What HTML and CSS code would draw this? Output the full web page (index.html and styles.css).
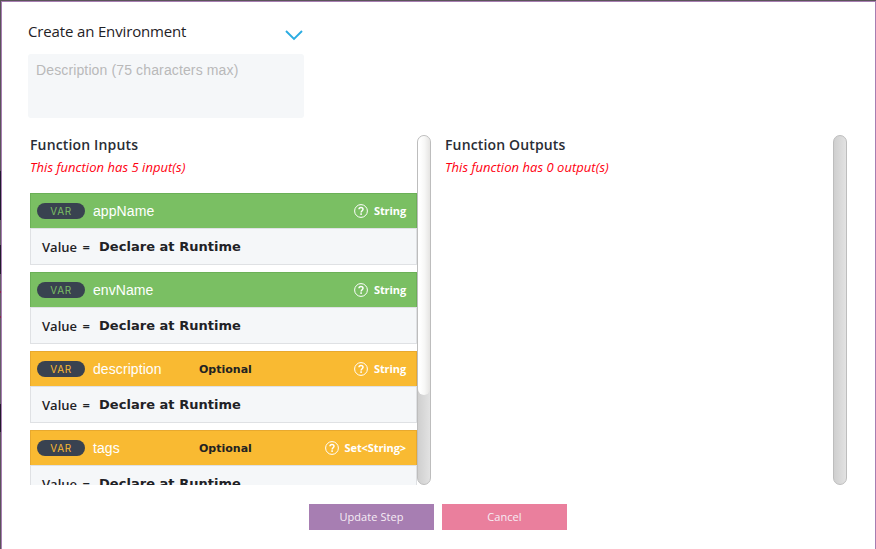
FILE: index.html
```html
<!DOCTYPE html>
<html lang="en">
<head>
<meta charset="utf-8">
<title>Create an Environment</title>
<link rel="stylesheet" href="styles.css">
</head>
<body>
<svg class="defs" width="0" height="0" aria-hidden="true">
  <symbol id="help" viewBox="0 0 14 14">
    <circle cx="7" cy="7" r="6.4" fill="none" stroke="currentColor" stroke-width="1"/>
    <path d="M5 5.3C5 3 9 3 9 5.2C9 6.7 7.1 6.8 7.1 8.5" fill="none" stroke="currentColor" stroke-width="1.5"/>
    <rect x="6.3" y="9.3" width="1.6" height="1.6" fill="currentColor"/>
  </symbol>
</svg>
<main class="dialog">
  <header class="title">
    <h1>Create an Environment</h1>
    <svg width="18" height="11" viewBox="0 0 18 11"><path d="M1 1L9 9L17 1" fill="none" stroke="#2bace2" stroke-width="1.9"/></svg>
  </header>
  <textarea class="desc" placeholder="Description (75 characters max)"></textarea>
  <div class="columns">
    <section class="col inputs">
      <div class="content">
        <h2>Function Inputs</h2>
        <p class="count">This function has 5 input(s)</p>
        <div class="list">
          <article class="card green">
            <div class="head"><span class="var">VAR</span><span class="name">appName</span><svg class="help"><use href="#help"/></svg><b class="type">String</b></div>
            <div class="body"><span class="label">Value =</span><b>Declare at Runtime</b></div>
          </article>
          <article class="card green">
            <div class="head"><span class="var">VAR</span><span class="name">envName</span><svg class="help"><use href="#help"/></svg><b class="type">String</b></div>
            <div class="body"><span class="label">Value =</span><b>Declare at Runtime</b></div>
          </article>
          <article class="card amber">
            <div class="head"><span class="var">VAR</span><span class="name">description</span><b class="optional">Optional</b><svg class="help"><use href="#help"/></svg><b class="type">String</b></div>
            <div class="body"><span class="label">Value =</span><b>Declare at Runtime</b></div>
          </article>
          <article class="card amber">
            <div class="head"><span class="var">VAR</span><span class="name">tags</span><b class="optional">Optional</b><svg class="help"><use href="#help"/></svg><b class="type">Set&lt;String&gt;</b></div>
            <div class="body"><span class="label">Value =</span><b>Declare at Runtime</b></div>
          </article>
        </div>
      </div>
      <div class="track"><div class="thumb"></div></div>
    </section>
    <section class="col outputs">
      <div class="content">
        <h2>Function Outputs</h2>
        <p class="count">This function has 0 output(s)</p>
      </div>
      <div class="track"></div>
    </section>
  </div>
  <footer class="actions">
    <button class="update">Update Step</button>
    <button class="cancel">Cancel</button>
  </footer>
</main>
</body>
</html>
```
FILE: styles.css
```css
* { box-sizing: border-box; }
body {
  margin: 0;
  height: 549px;
  overflow: hidden;
  padding: 1px 0 0 1px;
  font-family: "Open Sans", sans-serif;
  color: #1f2226;
  background: linear-gradient(#5a5559 0 171px, #1e1b2c 171px 220px, #5f5b60 220px 245px, #201d2a 245px 274px, #625d64 274px 291px, #8a2848 291px 293px, #625d64 293px 316px, #8a2848 316px 318px, #625d64 318px 404px, #211b2a 404px 432px, #5a5559 432px);
}
.defs { position: absolute; }
.dialog {
  height: 548px;
  border: 1px solid #a77eb2;
  border-bottom: 0;
  background: #fff;
  padding: 19px 28px 0 26px;
}
.title {
  display: flex;
  justify-content: space-between;
  width: 275px;
  height: 33px;
}
h1 { margin: -1px 0 0; font-size: 15px; font-weight: 400; line-height: 22px; letter-spacing: -.15px; }
.title svg { margin-top: 9px; }
.desc {
  display: block;
  width: 276px;
  height: 64px;
  border: 0;
  border-radius: 3px;
  padding: 8px;
  resize: none;
  background: #f5f7f9;
  font: 14px/17px "Liberation Sans", sans-serif;
  letter-spacing: .13px;
}
.desc::placeholder { color: #b9b9b9; }
.columns { display: flex; margin-top: 17px; height: 350px; }
.col { display: flex; }
.inputs { width: 403px; padding-left: 2px; }
.outputs { flex: 1; padding-left: 14px; }
.content { flex: 1; height: 350px; overflow: hidden; }
h2 { margin: 0; font-size: 14px; line-height: 20px; font-weight: 600; letter-spacing: .15px; color: #2a2d35; }
.count { margin: 3px 0 0; font-size: 13px; line-height: 19px; font-style: italic; letter-spacing: .04px; color: #ff0010; }
.list { margin-top: 16px; }
.card { margin-bottom: 7px; }
.head {
  display: flex;
  align-items: center;
  position: relative;
  height: 35px;
  padding: 0 10px 0 6px;
  border: 1px solid;
  border-bottom: 0;
  color: #fff;
}
.green .head { background: #7abf63; border-color: #6bb057; }
.amber .head { background: #f9ba32; border-color: #e8a92e; }
.var {
  width: 48px;
  height: 16px;
  border-radius: 8px;
  background: #394250;
  text-align: center;
  font: 400 10px/16px Inter, sans-serif;
  letter-spacing: .6px;
}
.green .var { color: #7abf63; }
.amber .var { color: #f9ba32; }
.name { margin-left: 8px; font: 14px/18px "Liberation Sans", sans-serif; letter-spacing: .08px; }
.optional { position: absolute; left: 168px; top: 10px; color: #222; font: bold 11px/16px "DejaVu Sans", sans-serif; }
.help { width: 14px; height: 14px; margin-left: auto; }
.type { margin-left: 6px; font-size: 11px; line-height: 16px; letter-spacing: -.1px; }
.body {
  display: flex;
  height: 37px;
  padding-left: 11px;
  border: 1px solid #dfe1e4;
  background: #f5f7f9;
  line-height: 36px;
}
.label { width: 57px; font-size: 13px; font-weight: 600; word-spacing: 2px; }
.body b { font: bold 13px/36px "DejaVu Sans", sans-serif; letter-spacing: .03px; }
.track {
  width: 14px;
  height: 350px;
  border: 1px solid #bdbdbd;
  border-radius: 7px;
  background: linear-gradient(90deg, #cfcfcf, #e2e2e2);
}
.thumb {
  height: 259px;
  border-radius: 6px;
  background: linear-gradient(90deg, #fff 15%, #f7f7f6 55%, #e5e4e2);
}
.actions { display: flex; justify-content: center; gap: 8px; margin: 19px 0 0 0; width: 820px; }
.actions button {
  width: 125px;
  height: 26px;
  padding: 0;
  border: 0;
  color: #f6edf5;
  font: 11px/26px "Open Sans", sans-serif;
  letter-spacing: .06px;
}
.update { background: #a77eb2; }
.cancel { background: #ea7f9d; }
```
